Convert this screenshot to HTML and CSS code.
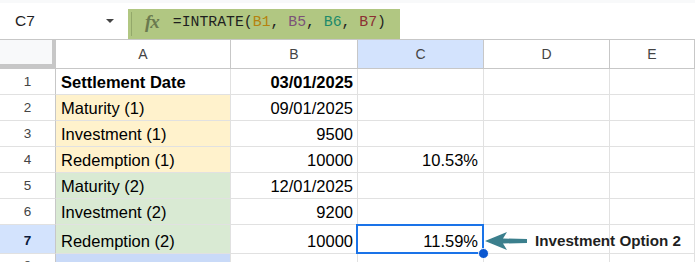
FILE: index.html
```html
<!DOCTYPE html>
<html lang="en">
<head>
  <meta charset="UTF-8">
  <meta name="viewport" content="width=device-width, initial-scale=1.0">
  <title>INTRATE</title>
  <link rel="stylesheet" href="styles.css">
</head>
<body>
  <div class="toolbar">
    <div class="namebox">
      <span class="cellref">C7</span>
      <span class="caret"></span>
    </div>
    <div class="formula">
      <span class="sep"></span>
      <span class="fx">fx</span>
      <span class="expr">=INTRATE(<span class="r1">B1</span>, <span class="r2">B5</span>, <span class="r3">B6</span>, <span class="r4">B7</span>)</span>
    </div>
  </div>

  <div class="sheet">
    <!-- header -->
    <div class="corner"></div>
    <div class="colhead">A</div>
    <div class="colhead">B</div>
    <div class="colhead active">C</div>
    <div class="colhead">D</div>
    <div class="colhead">E</div>

    <div class="rowhead">1</div>
    <div class="cell bold">Settlement Date</div>
    <div class="cell num bold">03/01/2025</div>
    <div class="cell"></div>
    <div class="cell"></div>
    <div class="cell"></div>

    <div class="rowhead">2</div>
    <div class="cell yellow">Maturity (1)</div>
    <div class="cell num">09/01/2025</div>
    <div class="cell"></div>
    <div class="cell"></div>
    <div class="cell"></div>

    <div class="rowhead">3</div>
    <div class="cell yellow">Investment (1)</div>
    <div class="cell num">9500</div>
    <div class="cell"></div>
    <div class="cell"></div>
    <div class="cell"></div>

    <div class="rowhead">4</div>
    <div class="cell yellow">Redemption (1)</div>
    <div class="cell num">10000</div>
    <div class="cell num pct">10.53%</div>
    <div class="cell"></div>
    <div class="cell"></div>

    <div class="rowhead">5</div>
    <div class="cell green">Maturity (2)</div>
    <div class="cell num">12/01/2025</div>
    <div class="cell"></div>
    <div class="cell"></div>
    <div class="cell"></div>

    <div class="rowhead">6</div>
    <div class="cell green">Investment (2)</div>
    <div class="cell num">9200</div>
    <div class="cell"></div>
    <div class="cell"></div>
    <div class="cell"></div>

    <div class="rowhead active">7</div>
    <div class="cell green">Redemption (2)</div>
    <div class="cell num">10000</div>
    <div class="cell num pct selected">11.59%<span class="handle"></span></div>
    <div class="cell note-cell">
      <div class="note">
        <svg class="arrow" width="42" height="18" viewBox="0 0 42 18">
          <polygon points="0,9 22,0 18,6.5 42,7 42,11 18,11.5 22,18" fill="#3b7f8d"/>
        </svg>
        <span class="note-text">Investment Option 2</span>
      </div>
    </div>
    <div class="cell"></div>

    <div class="rowhead last">8</div>
    <div class="cell last blue"></div>
    <div class="cell last"></div>
    <div class="cell last"></div>
    <div class="cell last"></div>
    <div class="cell last"></div>
  </div>
</body>
</html>
```

FILE: styles.css
```css
/* General */
body {
  margin: 0;
  font-family: "Liberation Sans", Arial, sans-serif;
  background-color: #fff;
  overflow: hidden;
}

/* Name box + formula bar */
.toolbar {
  display: flex;
  align-items: flex-end;
  height: 36px;
  border-top: 3px solid #f8f9fa;
}

.namebox {
  width: 128px;
  height: 36px;
  display: flex;
  align-items: center;
  justify-content: space-between;
  padding: 0 14px 0 15px;
  box-sizing: border-box;
}

.cellref {
  font-size: 15.5px;
  color: #1f1f1f;
}

.caret {
  width: 0;
  height: 0;
  border-left: 4.5px solid transparent;
  border-right: 4.5px solid transparent;
  border-top: 4.5px solid #444;
}

.formula {
  width: 272px;
  height: 30px;
  background-color: #b1c782;
  display: flex;
  align-items: center;
  padding-bottom: 5px;
  box-sizing: border-box;
}

.sep {
  width: 1px;
  height: 24px;
  margin: 5px 0 0 3px;
  background-color: #93a86a;
}

.fx {
  font-family: "Liberation Serif", serif;
  font-style: italic;
  font-weight: bold;
  font-size: 19px;
  color: #6b7a4f;
  margin-left: 13px;
  letter-spacing: -1px;
}

.expr {
  font-family: "Liberation Mono", monospace;
  font-size: 14.8px;
  color: #1f1f1f;
  margin-left: 14px;
}

.r1 { color: #b5820e; }
.r2 { color: #7b5378; }
.r3 { color: #1d8a6a; }
.r4 { color: #8c2f33; }

/* Grid */
.sheet {
  display: grid;
  grid-template-columns: 56px 175px 127px 126px 126px 1fr;
  grid-template-rows: 29px 26px 26px 26px 26px 26px 26px 29px 20px;
  border-top: 1px solid #c7c7c7;
}

.corner {
  background-color: #f8f9fa;
  border-right: 4px solid #c7c7c7;
  border-bottom: 5px solid #c7c7c7;
}

.colhead {
  display: flex;
  align-items: center;
  justify-content: center;
  font-size: 14px;
  color: #444;
  border-right: 1px solid #c7c7c7;
  border-bottom: 1px solid #c7c7c7;
}

.rowhead {
  display: flex;
  align-items: center;
  justify-content: center;
  font-size: 13.5px;
  color: #444;
  border-right: 1px solid #c7c7c7;
  border-bottom: 1px solid #e1e1e1;
  padding-bottom: 1px;
}

.active {
  background-color: #d3e3fd;
}

.rowhead.active {
  font-weight: bold;
  color: #0b1a3a;
  padding-top: 3px;
}

.rowhead.last {
  align-items: flex-start;
  padding-top: 4px;
}

.cell {
  display: flex;
  align-items: flex-end;
  padding: 0 4px 2px 5px;
  font-size: 16.5px;
  line-height: 19px;
  color: #000;
  white-space: nowrap;
  border-right: 1px solid #e1e1e1;
  border-bottom: 1px solid #e1e1e1;
}

.cell.last {
  border-bottom: none;
}

.bold {
  font-weight: bold;
}

.num {
  justify-content: flex-end;
}

.pct {
  padding-right: 5px;
}

.yellow {
  background-color: #fff2cc;
}

.green {
  background-color: #d9ead3;
}

.blue {
  background-color: #c9daf8;
}

/* Selected cell */
.selected {
  position: relative;
}

.selected::after {
  content: "";
  position: absolute;
  top: -1px;
  left: -2px;
  right: -1px;
  bottom: -1px;
  border: 2px solid #1a73e8;
}

.handle {
  position: absolute;
  right: -6px;
  bottom: -6px;
  width: 9px;
  height: 9px;
  border-radius: 50%;
  background-color: #0b57d0;
  border: 1px solid #fff;
  z-index: 2;
}

/* Annotation */
.note-cell {
  position: relative;
  overflow: visible;
}

.note {
  position: absolute;
  left: 1px;
  top: 6px;
  display: flex;
  align-items: center;
  z-index: 3;
}

.note-text {
  margin-left: 8px;
  font-size: 15.2px;
  font-weight: bold;
  color: #1f1f1f;
  white-space: nowrap;
}
```
